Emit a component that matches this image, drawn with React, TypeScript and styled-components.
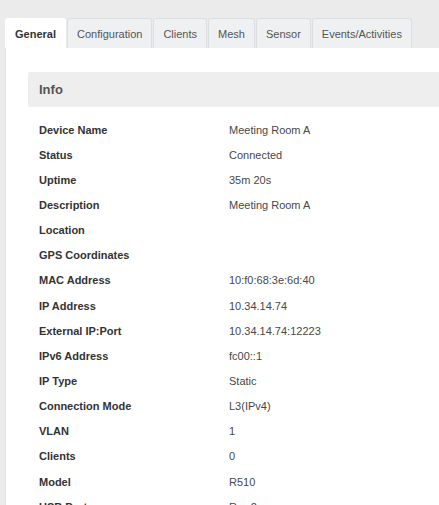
import React, { useState } from "react";
import styled, { createGlobalStyle } from "styled-components";

const GlobalStyle = createGlobalStyle`
  html, body {
    margin: 0;
    padding: 0;
    background: #ebebeb;
    font-family: "Liberation Sans", Arial, sans-serif;
  }
`;

const Page = styled.div`
  padding: 18px 0 0 5px;
  height: 505px;
  overflow: hidden;
  box-sizing: border-box;
`;

const TabBar = styled.div`
  display: flex;
  align-items: flex-end;
`;

const Tab = styled.div<{ $active?: boolean }>`
  height: 30px;
  box-sizing: border-box;
  padding: 0 9px;
  margin-right: 1px;
  display: flex;
  align-items: center;
  font-size: 11px;
  font-weight: ${(p) => (p.$active ? 700 : 400)};
  color: ${(p) => (p.$active ? "#333" : "#555")};
  background: ${(p) => (p.$active ? "#fff" : "#eef0f2")};
  border: 1px solid ${(p) => (p.$active ? "#fff" : "#dcdfe2")};
  border-bottom: none;
  border-radius: 3px 3px 0 0;
  cursor: pointer;
`;

const Panel = styled.div`
  background: #fff;
  border-left: 1px solid #e2e2e2;
  padding: 24px 0 0 22px;
  min-height: 460px;
`;

const SectionHeader = styled.div`
  background: #eeeeee;
  height: 35px;
  display: flex;
  align-items: center;
  padding-left: 11px;
  font-size: 13px;
  font-weight: 700;
  color: #555;
  border-radius: 2px 0 0 2px;
`;

const InfoTable = styled.div`
  padding: 10px 0 0 11px;
`;

const Row = styled.div`
  display: grid;
  grid-template-columns: 190px 1fr;
  height: 25.15px;
  align-items: center;
  font-size: 11px;
`;

const Label = styled.div`
  font-weight: 700;
  color: #333;
`;

const Value = styled.div`
  color: #484848;
`;

const tabs = ["General", "Configuration", "Clients", "Mesh", "Sensor", "Events/Activities"];

const info: [string, string][] = [
  ["Device Name", "Meeting Room A"],
  ["Status", "Connected"],
  ["Uptime", "35m 20s"],
  ["Description", "Meeting Room A"],
  ["Location", ""],
  ["GPS Coordinates", ""],
  ["MAC Address", "10:f0:68:3e:6d:40"],
  ["IP Address", "10.34.14.74"],
  ["External IP:Port", "10.34.14.74:12223"],
  ["IPv6 Address", "fc00::1"],
  ["IP Type", "Static"],
  ["Connection Mode", "L3(IPv4)"],
  ["VLAN", "1"],
  ["Clients", "0"],
  ["Model", "R510"],
  ["USB Port", "Rev.2"],
];

function App() {
  const [active, setActive] = useState<string>("General");
  return (
    <Page>
      <GlobalStyle />
      <TabBar>
        {tabs.map((t) => (
          <Tab key={t} $active={t === active} onClick={() => setActive(t)}>
            {t}
          </Tab>
        ))}
      </TabBar>
      <Panel>
        <SectionHeader>Info</SectionHeader>
        <InfoTable>
          {info.map(([label, value]) => (
            <Row key={label}>
              <Label>{label}</Label>
              <Value>{value}</Value>
            </Row>
          ))}
        </InfoTable>
      </Panel>
    </Page>
  );
}

export default App;
